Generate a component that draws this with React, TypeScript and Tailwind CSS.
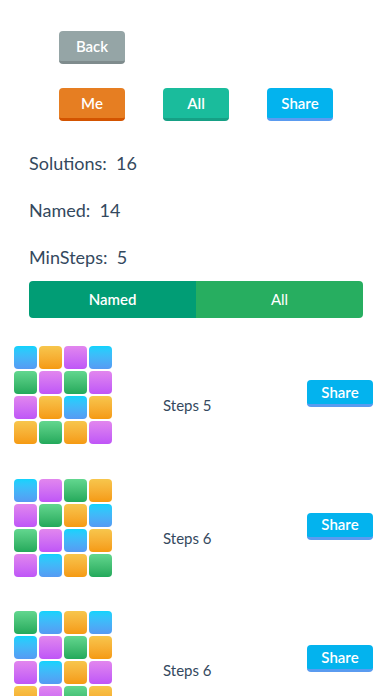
import React from "react";

type C = "b" | "o" | "p" | "g";

const cellCls: Record<C, string> = {
  b: "bg-linear-to-b from-[#0ed3fd] to-[#559af3]",
  o: "bg-linear-to-b from-[#f7c64c] to-[#f59a10]",
  p: "bg-linear-to-b from-[#e286ee] to-[#bf55f7]",
  g: "bg-linear-to-b from-[#62d78f] to-[#22a95b]",
};

const grids: { grid: C[]; steps: number }[] = [
  { grid: ["b", "o", "p", "b", "g", "p", "g", "p", "p", "o", "b", "o", "o", "g", "o", "p"], steps: 5 },
  { grid: ["b", "p", "g", "o", "p", "g", "o", "b", "g", "p", "b", "o", "p", "b", "o", "g"], steps: 6 },
  { grid: ["g", "b", "o", "b", "b", "p", "g", "o", "p", "b", "o", "p", "o", "p", "g", "o"], steps: 6 },
];

function Btn({ label, cls }: { label: string; cls: string }) {
  return (
    <div
      className={`w-[66px] h-[33px] rounded-[4px] border-b-[3px] flex items-center justify-center text-white text-[15px] font-semibold ${cls}`}
    >
      {label}
    </div>
  );
}

export default function App() {
  return (
    <div
      className="w-[392px] h-[696px] overflow-hidden bg-white"
      style={{ fontFamily: "Lato, 'Open Sans', sans-serif" }}
    >
      <div className="pt-[31px] pl-[59px]">
        <Btn label="Back" cls="bg-[#95a5a6] border-[#7f8c8d]" />
      </div>
      <div className="mt-[24px] pl-[59px] flex gap-[38px]">
        <Btn label="Me" cls="bg-[#e67e22] border-[#d35400]" />
        <Btn label="All" cls="bg-[#1abc9c] border-[#16a085]" />
        <Btn label="Share" cls="bg-[#03b3ee] border-[#5a9bf0]" />
      </div>
      <div className="mt-[19px] pl-[29px] text-[#34495e] text-[18px]">
        <div className="h-[47px] flex items-center">Solutions:&nbsp; 16</div>
        <div className="h-[47px] flex items-center">Named:&nbsp; 14</div>
        <div className="h-[47px] flex items-center">MinSteps:&nbsp; 5</div>
      </div>
      <div className="mx-[29px] h-[37px] rounded-[4px] overflow-hidden flex text-white text-[15px]">
        <div className="flex-1 bg-[#019d75] flex items-center justify-center font-semibold">Named</div>
        <div className="flex-1 bg-[#27ae60] flex items-center justify-center">All</div>
      </div>
      <div className="mt-[28px] flex flex-col gap-[34.5px]">
        {grids.map((r, i) => (
          <div key={i} className="flex items-start h-[98px]">
            <div className="ml-[14px] w-[98px] h-[98px] grid grid-cols-4 gap-[2px] shrink-0">
              {r.grid.map((c, j) => (
                <div key={j} className={`rounded-[4px] ${cellCls[c]}`} />
              ))}
            </div>
            <div className="ml-[51px] mt-[49px] text-[15px] leading-[20px] text-[#34495e]">
              Steps {r.steps}
            </div>
            <div className="ml-auto mr-[19px] mt-[34px] w-[66px] h-[27px] rounded-[4px] border-b-[3px] bg-[#03b3ee] border-[#5a9bf0] flex items-center justify-center text-white text-[15px] font-semibold">
              Share
            </div>
          </div>
        ))}
      </div>
    </div>
  );
}
